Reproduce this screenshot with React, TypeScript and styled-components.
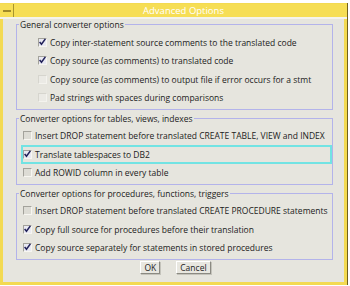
import React from "react";
import styled, { createGlobalStyle } from "styled-components";

const GlobalStyle = createGlobalStyle`
  html, body {
    margin: 0;
    padding: 0;
    background: #ffffff;
  }
  body {
    font-family: "Open Sans", "DejaVu Sans", Arial, sans-serif;
    color: #1c1c1c;
  }
`;

const Frame = styled.div`
  margin-top: 3px;
  width: 347px;
  height: 282px;
  box-sizing: border-box;
  border: 3px solid #f3da52;
  border-top-width: 1px;
  box-shadow: 1px 0 0 #6f5f1e;
  background: #e6e5de;
  display: flex;
  flex-direction: column;
`;

const TitleBar = styled.div`
  height: 13px;
  margin: 0 -3px;
  display: flex;
  align-items: stretch;
  background: #f6de55;
  border-bottom: 2px solid #f4f3ec;
`;

const MenuButton = styled.div`
  width: 14px;
  box-sizing: border-box;
  border-right: 1px solid #a8952e;
  display: flex;
  align-items: center;
  justify-content: center;

  span {
    width: 8px;
    height: 2px;
    background: #a08a2a;
  }
`;

const Title = styled.div`
  flex: 1;
  text-align: center;
  color: #ffffff;
  font-size: 9.5px;
  line-height: 13px;
  padding-left: 6px;
`;

const Content = styled.div`
  flex: 1;
  padding: 0 11px 0 13px;
  display: flex;
  flex-direction: column;
  gap: 3px;
`;

const Group = styled.fieldset`
  margin: 0;
  padding: 3px 0 1.5px 2px;
  border: 1px solid #b3b3ea;
  min-width: 0;

  legend {
    padding: 0 1px;
    font-size: 8.5px;
    line-height: 11px;
  }
`;

const Row = styled.label<{ $indent: number; $focused?: boolean }>`
  height: 18.5px;
  box-sizing: border-box;
  margin-left: 2px;
  padding-left: ${(p) => p.$indent}px;
  border: 2px solid ${(p) => (p.$focused ? "#72e3e3" : "transparent")};
  display: flex;
  align-items: center;
  gap: 3px;
  font-size: 8.5px;
  white-space: nowrap;
`;

const Box = styled.span<{ $checked?: boolean; $faint?: boolean }>`
  width: 9px;
  height: 9px;
  box-sizing: border-box;
  flex: none;
  border: 1px solid;
  border-color: ${(p) =>
    p.$faint ? "#d6d5ce #f4f3ee #f4f3ee #d6d5ce" : "#a3a29b #f7f6f1 #f7f6f1 #a3a29b"};
  background: ${(p) => (p.$checked ? "#e9e9f2" : p.$faint ? "#ebeae5" : "#dddcd5")};
  display: flex;
  align-items: center;
  justify-content: center;

  svg {
    display: block;
  }
`;

const Buttons = styled.div`
  display: flex;
  justify-content: center;
  align-items: center;
  gap: 16px;
  margin-top: -2px;
  padding-left: 2px;
`;

const Button = styled.button`
  height: 13px;
  padding: 0 3px;
  font-family: "Open Sans", "DejaVu Sans", Arial, sans-serif;
  font-size: 8.5px;
  line-height: 11px;
  color: #1c1c1c;
  background: #e8e7e0;
  border: 1px solid;
  border-color: #ffffff #8b8a82 #8b8a82 #ffffff;
  box-shadow: 1px 1px 0 #c4c3bb;
`;

function Check({ checked, faint }: { checked?: boolean; faint?: boolean }) {
  return (
    <Box $checked={checked} $faint={faint}>
      {checked && (
        <svg width="9" height="9" viewBox="0 0 9 9">
          <path d="M0.8 3.8 L3.2 6.6 L8.2 -0.2" fill="none" stroke="#22225a" strokeWidth="2" />
        </svg>
      )}
    </Box>
  );
}

interface Option {
  text: string;
  checked?: boolean;
  faint?: boolean;
  focused?: boolean;
}

const groups: { title: string; indent: number; options: Option[] }[] = [
  {
    title: "General converter options",
    indent: 15,
    options: [
      { text: "Copy inter-statement source comments to the translated code", checked: true },
      { text: "Copy source (as comments) to translated code", checked: true },
      { text: "Copy source (as comments) to output file if error occurs for a stmt", faint: true },
      { text: "Pad strings with spaces during comparisons", faint: true },
    ],
  },
  {
    title: "Converter options for tables, views, indexes",
    indent: 0,
    options: [
      { text: "Insert DROP statement before translated CREATE TABLE, VIEW and INDEX" },
      { text: "Translate tablespaces to DB2", checked: true, focused: true },
      { text: "Add ROWID column in every table" },
    ],
  },
  {
    title: "Converter options for procedures, functions, triggers",
    indent: 0,
    options: [
      { text: "Insert DROP statement before translated CREATE PROCEDURE statements" },
      { text: "Copy full source for procedures before their translation", checked: true },
      { text: "Copy source separately for statements in stored procedures", checked: true },
    ],
  },
];

export default function App() {
  return (
    <>
      <GlobalStyle />
      <Frame>
        <TitleBar>
          <MenuButton>
            <span />
          </MenuButton>
          <Title>Advanced Options</Title>
        </TitleBar>
        <Content>
          {groups.map((g) => (
            <Group key={g.title}>
              <legend>{g.title}</legend>
              {g.options.map((o) => (
                <Row key={o.text} $indent={g.indent} $focused={o.focused}>
                  <Check checked={o.checked} faint={o.faint} />
                  <span>{o.text}</span>
                </Row>
              ))}
            </Group>
          ))}
          <Buttons>
            <Button type="button">OK</Button>
            <Button type="button">Cancel</Button>
          </Buttons>
        </Content>
      </Frame>
    </>
  );
}
